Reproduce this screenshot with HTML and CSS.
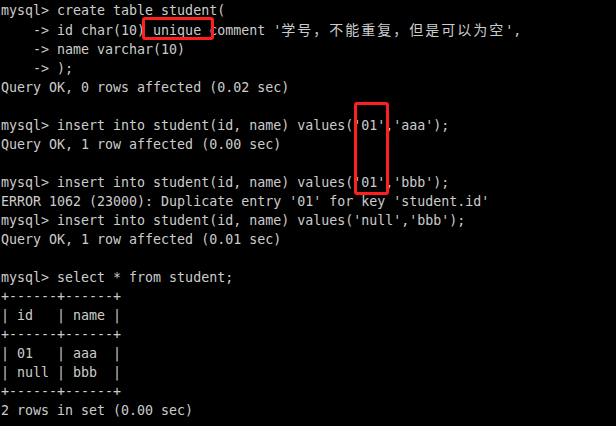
FILE: index.html
```html
<!DOCTYPE html>
<html>
<head>
<meta charset="utf-8">
<link rel="stylesheet" href="styles.css">
</head>
<body>
<div class="term">
<pre class="out">mysql&gt; create table student(
    -&gt; id char(10) unique comment '<span class="cjk">学号，不能重复，但是可以为空</span>',
    -&gt; name varchar(10)
    -&gt; );
Query OK, 0 rows affected (0.02 sec)

mysql&gt; insert into student(id, name) values('01','aaa');
Query OK, 1 row affected (0.00 sec)

mysql&gt; insert into student(id, name) values('01','bbb');
ERROR 1062 (23000): Duplicate entry '01' for key 'student.id'
mysql&gt; insert into student(id, name) values('null','bbb');
Query OK, 1 row affected (0.01 sec)

mysql&gt; select * from student;
+------+------+
| id   | name |
+------+------+
| 01   | aaa  |
| null | bbb  |
+------+------+
2 rows in set (0.00 sec)</pre>
<div class="mark mark-unique"></div>
<div class="mark mark-ids"></div>
</div>
</body>
</html>
```
FILE: styles.css
```css
html, body {
  margin: 0;
  padding: 0;
  background: #000;
}
.term {
  position: relative;
  width: 616px;
  height: 426px;
  background: #000;
  overflow: hidden;
}
.out {
  margin: 0;
  padding: 1px 0 0 1px;
  font-family: "DejaVu Sans Mono", "Liberation Mono", monospace;
  font-size: 13.3px;
  line-height: 19px;
  color: #cccccc;
  white-space: pre;
}
.cjk {
  font-family: "Noto Sans CJK SC", sans-serif;
  font-size: 14px;
  letter-spacing: 2px;
}
.mark {
  position: absolute;
  border: 3px solid #ff1f1f;
  border-radius: 3px;
  box-sizing: border-box;
}
.mark-unique {
  left: 142px;
  top: 17px;
  width: 72px;
  height: 23px;
}
.mark-ids {
  left: 354px;
  top: 102px;
  width: 35px;
  height: 93px;
}
```
